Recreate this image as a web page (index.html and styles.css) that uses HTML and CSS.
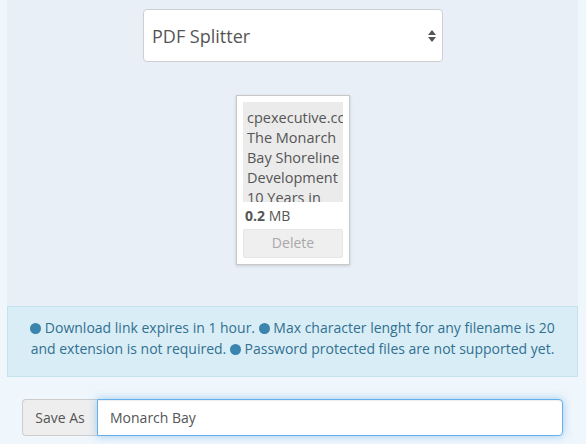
FILE: index.html
```html
<!DOCTYPE html>
<html>
<head>
<meta charset="utf-8">
<link rel="stylesheet" href="styles.css">
</head>
<body>
<div class="panel">
  <div class="select">
    <span class="select-label">PDF Splitter</span>
    <svg class="select-arrows" width="10" height="14" viewBox="0 0 10 14">
      <path d="M5 1 L9 6 L1 6 Z" fill="#555"/>
      <path d="M1 8 L9 8 L5 13 Z" fill="#555"/>
    </svg>
  </div>
  <div class="card">
    <div class="thumb">
      <div class="thumb-text">cpexecutive.com<br>The Monarch<br>Bay Shoreline<br>Development<br>10 Years in</div>
    </div>
    <div class="size"><b>0.2</b> MB</div>
    <div class="delete">Delete</div>
  </div>
</div>
<div class="info">
  <span class="dot"></span> Download link expires in 1 hour. <span class="dot"></span> Max character lenght for any filename is 20 and extension is not required. <span class="dot"></span> Password protected files are not supported yet.
</div>
<div class="save-row">
  <div class="input-group">
    <span class="addon">Save As</span>
    <div class="input">Monarch Bay</div>
  </div>
</div>
</body>
</html>
```

FILE: styles.css
```css
html, body {
  margin: 0;
  padding: 0;
}
body {
  background: #eff6fc;
  font-family: "Open Sans", "Liberation Sans", sans-serif;
  color: #555;
  width: 586px;
  height: 444px;
  overflow: hidden;
}
.panel {
  margin: 0 8px 0 7px;
  background: #e8eff7;
  height: 306px;
  box-sizing: border-box;
  padding-top: 9px;
  display: flex;
  flex-direction: column;
  align-items: center;
}
.select {
  width: 300px;
  height: 53px;
  box-sizing: border-box;
  background: #fff;
  border: 1px solid #cfcfcf;
  border-radius: 4px;
  display: flex;
  align-items: center;
  justify-content: space-between;
  padding: 0 5px 0 8px;
  margin-left: 1px;
}
.select-label {
  font-size: 18px;
  color: #555;
}
.select-arrows {
  display: block;
}
.card {
  margin-top: 33px;
  width: 114px;
  height: 170px;
  box-sizing: border-box;
  background: #fff;
  border: 1px solid #c8c8c8;
  box-shadow: 0 1px 3px rgba(0,0,0,0.15);
  padding: 6px 6px 0 6px;
  margin-left: 1px;
}
.thumb {
  width: 100px;
  height: 100px;
  background: #ebebeb;
  overflow: hidden;
}
.thumb-text {
  font-size: 14.5px;
  line-height: 20px;
  padding: 6px 0 0 4px;
  color: #555;
  white-space: nowrap;
  text-align: left;
  overflow: hidden;
}
.size {
  font-size: 14px;
  line-height: 20px;
  margin-top: 4px;
  padding-left: 2px;
  color: #555;
}
.size b {
  font-weight: 700;
}
.delete {
  margin-top: 3px;
  height: 29px;
  box-sizing: border-box;
  background: #efefef;
  border: 1px solid #e6e6e6;
  border-radius: 2px;
  font-size: 14px;
  line-height: 26px;
  text-align: center;
  color: #a8a8a8;
}
.info {
  margin: 0 8px 0 7px;
  height: 71px;
  box-sizing: border-box;
  background: #d9edf7;
  border: 1px solid #c4e3ef;
  color: #31708f;
  font-size: 14px;
  line-height: 21px;
  text-align: center;
  padding: 10px 18px 0 18px;
}
.dot {
  display: inline-block;
  width: 11px;
  height: 11px;
  border-radius: 50%;
  background: #3a84ad;
  vertical-align: -1px;
}
.save-row {
  padding: 22px 23px 0 22px;
}
.input-group {
  display: flex;
  height: 37px;
}
.addon {
  width: 75px;
  box-sizing: border-box;
  background: #eee;
  border: 1px solid #ccc;
  border-right: none;
  border-radius: 4px 0 0 4px;
  font-size: 14px;
  line-height: 35px;
  text-align: center;
  color: #555;
}
.input {
  flex: 1;
  box-sizing: border-box;
  background: #fff;
  border: 1px solid #66afe9;
  border-radius: 0 4px 4px 0;
  box-shadow: inset 0 1px 1px rgba(0,0,0,.075), 0 0 8px rgba(102,175,233,.6);
  font-size: 14px;
  line-height: 35px;
  padding-left: 12px;
  color: #555;
}
```
